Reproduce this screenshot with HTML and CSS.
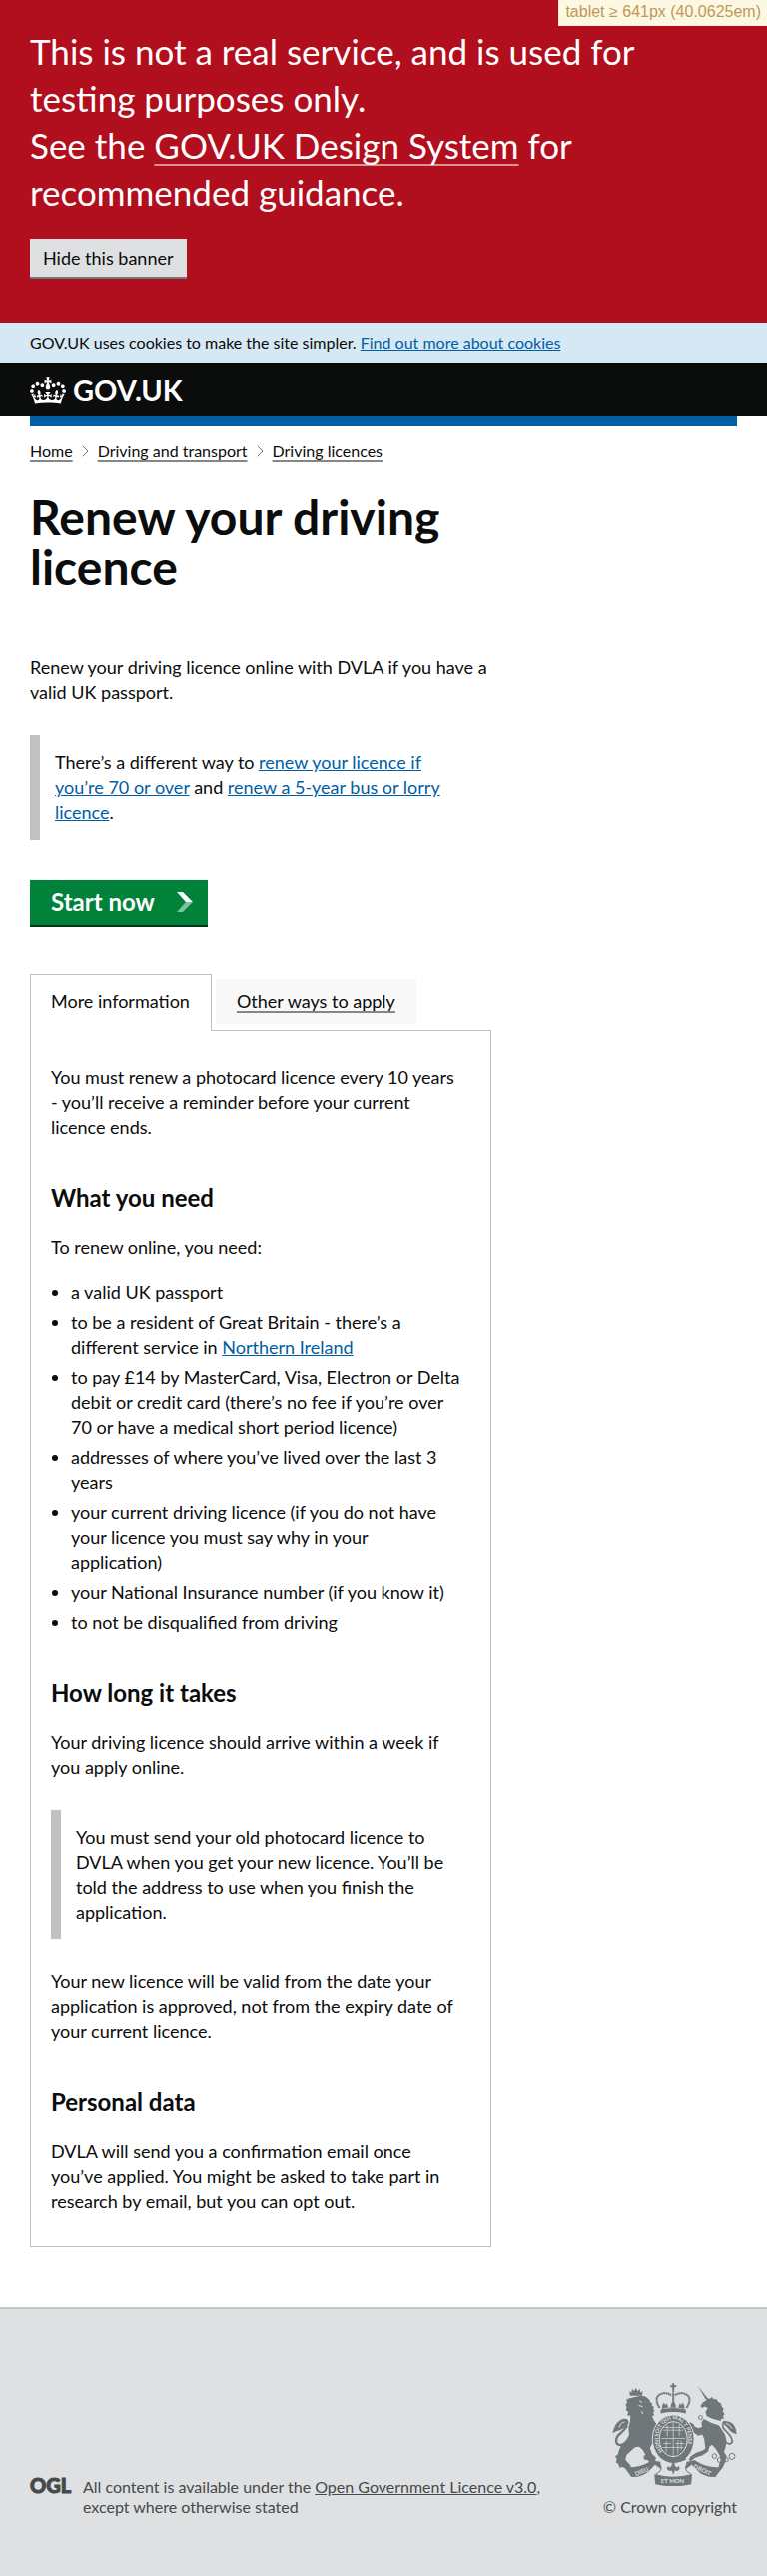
FILE: index.html
```html
<!DOCTYPE html>
<html lang="en">
<head>
<meta charset="utf-8">
<meta name="viewport" content="width=device-width, initial-scale=1">
<title>Renew your driving licence</title>
<link rel="stylesheet" href="styles.css">
</head>
<body>
<div class="breakpoint">tablet ≥ 641px (40.0625em)</div>
<section class="banner" aria-label="Test service warning">
  <div class="container">
    <p class="banner-text">This is not a real service, and is used for testing purposes only.<br>See the <a href="#">GOV.UK Design System</a> for recommended guidance.</p>
    <button class="banner-button" type="button">Hide this banner</button>
  </div>
</section>
<div class="cookies">
  <p class="container">GOV.UK uses cookies to make the site simpler. <a class="link" href="#">Find out more about cookies</a></p>
</div>
<header class="header">
  <div class="container">
    <a class="logo" href="#">
      <svg class="crown" viewBox="0 0 132 97" aria-hidden="true"><path fill="currentColor" d="M25 30.2c3.5 1.5 7.7-.2 9.1-3.7 1.5-3.6-.2-7.8-3.9-9.2-3.6-1.4-7.6.3-9.1 3.9-1.4 3.5.3 7.5 3.9 9zM9 39.5c3.6 1.5 7.8-.2 9.2-3.7 1.5-3.6-.2-7.8-3.9-9.1-3.6-1.5-7.6.2-9.1 3.8-1.4 3.5.3 7.5 3.8 9zM4.4 57.2c3.5 1.5 7.7-.2 9.1-3.8 1.5-3.6-.2-7.7-3.9-9.1-3.5-1.5-7.6.3-9.1 3.8-1.4 3.5.3 7.6 3.9 9.1zm38.3-21.4c3.5 1.5 7.7-.2 9.1-3.8 1.5-3.6-.2-7.7-3.9-9.1-3.6-1.5-7.6.3-9.1 3.8-1.3 3.6.4 7.7 3.9 9.1zm64.4-5.6c-3.6 1.5-7.8-.2-9.1-3.7-1.5-3.6.2-7.8 3.8-9.2 3.6-1.4 7.7.3 9.2 3.9 1.3 3.5-.4 7.5-3.9 9zm15.9 9.3c-3.6 1.5-7.7-.2-9.1-3.7-1.5-3.6.2-7.8 3.7-9.1 3.6-1.5 7.7.2 9.2 3.8 1.5 3.5-.3 7.5-3.8 9zm4.7 17.7c-3.6 1.5-7.8-.2-9.2-3.8-1.5-3.6.2-7.7 3.9-9.1 3.6-1.5 7.7.3 9.2 3.8 1.3 3.5-.4 7.6-3.9 9.1zM89.3 35.8c-3.6 1.5-7.8-.2-9.2-3.8-1.4-3.6.2-7.7 3.9-9.1 3.6-1.5 7.7.3 9.2 3.8 1.4 3.6-.3 7.7-3.9 9.1zM69.7 17.7l8.9 4.7V9.3l-8.9 2.8c-.2-.3-.5-.6-.9-.9L72.4 0H59.6l3.5 11.2c-.3.3-.6.5-.9.9l-8.8-2.8v13.1l8.8-4.7c.3.3.6.7.9.9l-5 15.4v.1c-.2.8-.4 1.6-.4 2.4 0 4.1 3.1 7.5 7 8.1h.2c.3 0 .7.1 1 .1.4 0 .7 0 1-.1h.2c4-.6 7.1-4.1 7.1-8.1 0-.8-.1-1.7-.4-2.4V34l-5.1-15.4c.4-.2.7-.6 1-.9zM66 92.8c16.9 0 32.8 1.1 47.1 3.2 4-16.9 8.9-26.7 14-33.5l-9.6-3.4c1 4.9 1.1 7.2 0 10.2-1.5-1.4-3-4.3-4.2-8.7L108.6 76c2.8-2 5-3.2 7.5-3.3-4.4 9.4-10 11.9-13.6 11.2-4.3-.8-6.3-4.6-5.6-7.9 1-4.7 5.7-5.9 8-.5 4.3-8.7-3-11.4-7.6-8.8 7.1-7.2 7.9-13.5 2.1-21.1-8 6.1-8.1 12.3-4.5 20.8-4.7-5.4-12.1-2.5-9.5 6.2 3.4-5.2 7.9-2 7.2 3.1-.6 4.3-6.4 7.8-13.5 7.2-10.3-.9-10.9-8-11.2-13.8 2.5-.5 7.1 1.8 11 7.3L80.2 60c-4.1 4.4-8 5.3-12.3 5.4 1.4-4.4 8-11.6 8-11.6H55.5s6.4 7.2 7.9 11.6c-4.2-.1-8-1-12.3-5.4l1.4 16.4c3.9-5.5 8.5-7.7 10.9-7.3-.3 5.8-.9 12.8-11.1 13.8-7.2.6-12.9-2.9-13.5-7.2-.7-5 3.8-8.3 7.1-3.1 2.7-8.7-4.6-11.6-9.4-6.2 3.7-8.5 3.6-14.7-4.6-20.8-5.8 7.6-5 13.9 2.2 21.1-4.7-2.6-11.9.1-7.7 8.8 2.3-5.5 7.1-4.2 8.1.5.7 3.3-1.3 7.1-5.7 7.9-3.5.7-9-1.8-13.5-11.2 2.5.1 4.7 1.3 7.5 3.3l-4.7-15.4c-1.2 4.4-2.7 7.2-4.3 8.7-1.1-3-.9-5.3 0-10.2l-9.5 3.4c5 6.9 9.9 16.7 14 33.5 14.8-2.1 30.8-3.2 47.7-3.2z"/></svg>
      <span>GOV.UK</span>
    </a>
  </div>
</header>
<div class="container">
  <div class="header-bar"></div>
  <nav class="breadcrumbs" aria-label="Breadcrumb">
    <a href="#">Home</a>
    <svg viewBox="0 0 7 12" aria-hidden="true"><path d="M.7.7 6 6 .7 11.3"/></svg>
    <a href="#">Driving and transport</a>
    <svg viewBox="0 0 7 12" aria-hidden="true"><path d="M.7.7 6 6 .7 11.3"/></svg>
    <a href="#">Driving licences</a>
  </nav>
  <main class="main">
    <h1>Renew your driving licence</h1>
    <p>Renew your driving licence online with DVLA if you have a valid UK passport.</p>
    <div class="inset inset-intro">There’s a different way to <a class="link" href="#">renew your licence if you’re 70 or over</a> and <a class="link" href="#">renew a 5-year bus or lorry licence</a>.</div>
    <a class="start" href="#">Start now
      <svg viewBox="0 0 16 20" aria-hidden="true"><path fill="#fff" d="M0 0h6l10 10H9z"/><path fill="#fff" opacity=".5" d="M9 10h7L6 20H0z"/></svg>
    </a>
    <div class="tabs" role="tablist">
      <a class="tab tab-selected" role="tab" aria-selected="true" href="#more-information">More information</a>
      <a class="tab" role="tab" aria-selected="false" href="#other-ways">Other ways to apply</a>
    </div>
    <section class="panel" id="more-information" role="tabpanel">
      <p>You must renew a photocard licence every 10 years -&nbsp;you’ll receive a reminder before your current licence ends.</p>
      <h2>What you need</h2>
      <p>To renew online, you need:</p>
      <ul>
        <li>a valid UK passport</li>
        <li>to be a resident of Great Britain - there’s a different service in <a class="link" href="#">Northern Ireland</a></li>
        <li>to pay £14 by MasterCard, Visa, Electron or Delta debit or credit card (there’s no fee if you’re over 70 or have a medical short period licence)</li>
        <li>addresses of where you’ve lived over the last 3 years</li>
        <li>your current driving licence (if you do not have your licence you must say why in your application)</li>
        <li>your National Insurance number (if you know it)</li>
        <li>to not be disqualified from driving</li>
      </ul>
      <h2>How long it takes</h2>
      <p>Your driving licence should arrive within a week if you apply online.</p>
      <div class="inset">You must send your old photocard licence to DVLA when you get your new licence. You’ll be told the address to use when you finish the application.</div>
      <p>Your new licence will be valid from the date your application is approved, not from the expiry date of your current licence.</p>
      <h2>Personal data</h2>
      <p>DVLA will send you a confirmation email once you’ve applied. You might be asked to take part in research by email, but you can opt out.</p>
    </section>
  </main>
</div>
<footer class="footer">
  <div class="container footer-row">
    <div class="licence">
      <svg class="ogl" viewBox="0 0 41 17" role="img" aria-label="OGL"><text x="0" y="16">OGL</text></svg>
      <p>All content is available under the <a href="#">Open Government Licence v3.0</a>, except where otherwise stated</p>
    </div>
    <a class="copyright" href="#">
      <svg class="crest" viewBox="68 38 376 310" aria-hidden="true">
        <defs><path id="garter" d="M220 243A45 56 0 1 1 284 243"/></defs>
        <g class="ink">
          <!-- centre crown -->
          <path d="M249 39h6v6h6v6h-6v8h-6v-8h-6v-6h6z"/>
          <path d="M214 118q38-10 76 0v12q-38-9-76 0z"/>
          <path d="M218 116l1-11 5-8 4 8 4-6 4 9-1 4 9-1 1-8 3-5 4-9 4 9 3 5 1 8 9 1-1-4 4-9 4 6 4-8 5 8 1 11q-34-8-68 0z"/>
          <!-- lion -->
          <path d="M122 76l-3-14 7 5 2-12 6 8 5-10 6 10 6-8 2 12 7-5-2 14z"/>
          <path d="M120 84l34-8 12 2 8 5 7 7 2 7 6 3-2 5 8 7-4 3 5 8-5 3 4 10-7 1 6 14 8 12 2 12 8 4-3 8 6 8-8 3-4-8-8-1-4 17 2 12-20 12-16-2-20 3-13 12-13 12-3 14 7 8 9 10-2 8h-13l-10-4-9 2-4-12-7-4 3-10-5-8 8-6 4-14 8-17 13-12 9-15-2-22 5-20 1-16-10-3 4-9-8-6 3-8-4-8 5-5-2-10z"/>
          <path d="M150 212l34-14 4 22-6 14 6 18 12 10-2 10-18 4-6-6-10-2-2-8 6-6-8-14-12-12z"/>
          <path d="M182 186l20 6 2 8 8 3-4 8-16-2-12-8z"/>
          <!-- unicorn -->
          <path d="M326 46l30 39-5 4z"/>
          <path d="M352 90l4-7 6 3 6-6 5 6 9 1 6 8 8 5 2 9 6 7-3 8 6 8-5 5 3 9-8-1-2 7q-22-3-42-14l-4-13 7-12-10-4-7 4-5-6 7-10z"/>
          <path d="M344 146q20 12 46 20l8 12 10 16 5 20-4 20-4 12 8 12-4 18-8 16-6 8-8-2 3-14 5-14-3-14-11-18-12-14-8 6-4 14-18 12-22 7-10 10-9-3 6-11 17-11 20-7 8-6-2-14-2-16-6-12-12 4-17-12-1-10-10-14 4-5 10 6 4 8 12 4 10-4-2-14 6-8z"/>
        </g>
        <g class="line">
          <path d="M211 113q-18-28 0-40 18-10 35 2m46 38q18-28 0-40-18-10-35 2M252 60v52" stroke-width="6" stroke-dasharray="6 1"/>
          <!-- tails -->
          <path d="M112 219q-30 14-32-6 0-14 12-23 16-14 21-24" stroke-width="7"/>
          <path d="M404 214q22 14 26 0-3-16-16-28-17-15-12-27 5-10 15 2" stroke-width="5"/>
          <!-- chain -->
          <circle cx="397" cy="194" r="5"/><circle cx="399" cy="218" r="5"/><circle cx="376" cy="258" r="7"/><circle cx="392" cy="270" r="7"/><circle cx="412" cy="269" r="6"/><circle cx="429" cy="259" r="9"/><circle cx="334" cy="142" r="6"/>
        </g>
        <path class="ink" d="M69 190q5-34 30-44 24-2 17 17-10 12-26 17-13 3-21 10zM443 192q-14-2-26-18-23-20-12-21 22-2 32 15 6 12 6 24z"/>
        <path class="gap" d="M89 172q6-18 16-16M411 159q15 7 18 16M150 92l8 4m-10 10l12 3m-3 14l3 9"/>
        <path class="gap" d="M346 137q14 14 44 19" stroke-dasharray="5 3"/>
        <!-- garter and shield -->
        <ellipse class="rim" cx="252" cy="207" rx="63" ry="73"/>
        <ellipse class="gap" cx="252" cy="207" rx="42" ry="53"/>
        <text class="motto small"><textPath href="#garter">HONI SOIT QUI MAL Y PENSE</textPath></text>
        <path class="gap thin" d="M216 205h72M252 156v102M222 180h60M220 232h64M234 165v34m36-36v34m-49-25h60M231 212v34m-9-26h24m12 0h28m-20-10v40m10-38v28"/>
        <path class="ink" d="M234 256q20 14 50 4l8 8q-34 17-65 2z"/>
        <!-- ribbons -->
        <path class="ink" d="M105 292q48 2 82-21l26 4 2 22-18-13-14 14q-20 24-57 23zM400 292q-48 2-82-21l-26 4-2 22 18-13 14 14q20 24 57 23z"/>
        <path class="ink" d="M195 312q57 16 114 0l-3 31q-54 12-108 0z"/>
        <path class="line" d="M187 272q29 4 29 23-3 12-16 17M318 272q-29 4-29 23 3 12 16 17"/>
        <path class="ink" d="M249 270h6l1 15 6 8 6-5 4 7-7 8-9-2-4 14-4-14-9 2-7-8 4-7 6 5 6-8z"/>
        <g class="motto">
          <text x="140" y="319" transform="rotate(-24 140 319)">DIEU</text>
          <text x="215" y="339">ET MON</text>
          <text x="312" y="294" transform="rotate(25 312 294)">DROIT</text>
        </g>
      </svg>
      <span>© Crown copyright</span>
    </a>
  </div>
</footer>
</body>
</html>
```
FILE: styles.css
```css
* { box-sizing: border-box; }
body {
  margin: 0;
  background: #fff;
  color: #0b0c0c;
  font-family: Lato, "Liberation Sans", sans-serif;
  font-size: 18px;
  line-height: 25px;
}
h1, h2, p, ul { margin: 0; }
p { margin-bottom: 20px; }
.container { max-width: 960px; margin: 0 30px; }
.link { color: #005ea5; }

.breakpoint {
  position: absolute;
  top: 0;
  right: 0;
  padding: 3px 6px 4px 6px;
  background: #fcf8e3;
  color: #c09853;
  border-left: 1px solid #fbeed5;
  border-bottom: 1px solid #fbeed5;
  font: 16px/18px "Liberation Sans", sans-serif;
}
.banner { padding: 28px 0 44px; background: #b10e1e; color: #fff; }
.banner-text { margin-bottom: 23px; font-size: 35px; line-height: 47px; }
.banner-text a {
  color: #fff;
  text-decoration-color: rgba(255, 255, 255, .55);
  text-decoration-thickness: 2px;
  text-underline-offset: 5px;
  text-decoration-skip-ink: none;
}
.banner-button {
  display: block;
  padding: 7px 13px 6px;
  border: 0;
  border-bottom: 2px solid #6f777b;
  background: #dee0e2;
  color: #0b0c0c;
  font: inherit;
}
.cookies { padding: 10px 0; background: #d5e8f3; font-size: 16px; line-height: 20px; }
.cookies p { margin-bottom: 0; }
.header { padding: 9px 0 8px; background: #0b0c0c; }
.logo {
  display: flex;
  align-items: center;
  gap: 7px;
  width: max-content;
  color: #fff;
  font-size: 29px;
  font-weight: 700;
  line-height: 36px;
  text-decoration: none;
}
.crown { width: 36px; height: 27px; }
.header-bar { height: 10px; background: #005ea5; }
.breadcrumbs {
  display: flex;
  align-items: center;
  gap: 9px;
  margin-top: 15px;
  font-size: 16px;
  line-height: 20px;
}
.breadcrumbs a, .tab {
  color: #0b0c0c;
  text-decoration-color: #858686;
  text-decoration-thickness: 2px;
  text-underline-offset: 3px;
  text-decoration-skip-ink: none;
}
.breadcrumbs svg { width: 7px; height: 12px; fill: none; stroke: #6f777b; }

.main { width: calc(66.66% - 10px); padding: 31px 0 60px; }
h1 { margin-bottom: 64px; font-size: 48px; line-height: 50px; }
h2 { margin: 43px 0 22px; font-size: 24px; line-height: 30px; }
.inset { margin: 30px 0; padding: 15px; border-left: 10px solid #bfc1c3; }
.inset-intro { padding-right: 35px; }
.start {
  display: flex;
  align-items: center;
  gap: 22px;
  width: max-content;
  margin: 40px 0 47px;
  padding: 7px 15px 8px 21px;
  border-bottom: 2px solid #003618;
  background: #00823b;
  color: #fff;
  font-size: 24px;
  font-weight: 700;
  line-height: 30px;
  text-decoration: none;
}
.start svg { width: 16px; height: 20px; }
.tabs { display: flex; align-items: flex-start; gap: 4px; }
.tab { margin: 5px 0; padding: 10px 21px; background: #f8f8f8; }
.tab-selected {
  margin: 0 0 -1px;
  padding: 14px 21px 17px 20px;
  border: 1px solid #bfc1c3;
  border-bottom: 0;
  background: #fff;
  text-decoration: none;
}
.panel { padding: 34px 28px 12px 20px; border: 1px solid #bfc1c3; }
ul { padding-left: 20px; }
li + li { margin-top: 5px; }

.footer {
  padding: 74px 0 61px;
  border-top: 2px solid #bfc9cc;
  background: #dee0e2;
  color: #454a4c;
  font-size: 16px;
  line-height: 20px;
}
.footer a { color: inherit; }
.footer-row { display: flex; align-items: flex-end; justify-content: space-between; gap: 30px; }
.licence { display: flex; flex: 1; gap: 12px; }
.licence p { max-width: 460px; margin: 0; }
.ogl { flex: none; width: 41px; height: 17px; overflow: visible; }
.ogl text { fill: #454a4c; stroke: #454a4c; font: 900 20px Lato, sans-serif; }
.copyright { display: flex; flex-direction: column; align-items: flex-end; gap: 11px; }
.footer .copyright { text-decoration: none; }
.crest { width: 125px; height: 103px; }
.ink { fill: #6f777b; }
.line { fill: none; stroke: #6f777b; stroke-width: 3; }
.rim { fill: #6f777b; stroke: #dee0e2; stroke-width: 3; }
.gap { fill: none; stroke: #dee0e2; stroke-width: 3; }
.thin { stroke-width: 2; }
.motto { fill: #dee0e2; font: 700 18px Lato, sans-serif; }
.small { font-size: 16px; }
```
